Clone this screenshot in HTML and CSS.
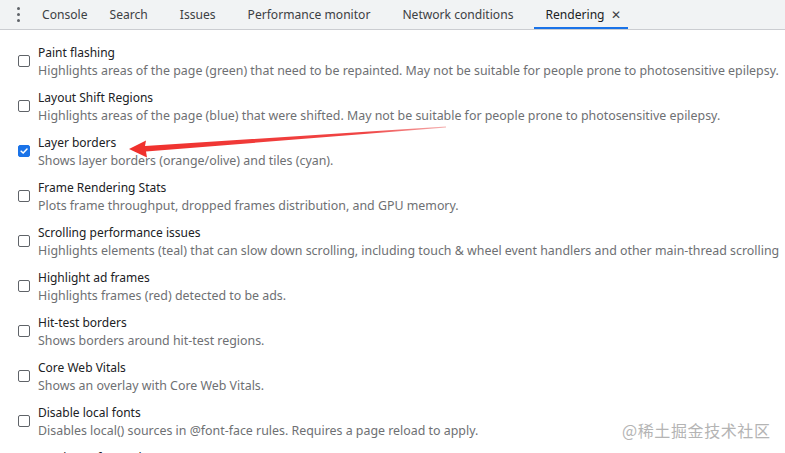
FILE: index.html
```html
<!DOCTYPE html>
<html>
<head>
<meta charset="utf-8">
<link rel="stylesheet" href="styles.css">
</head>
<body>
<div class="tabbar">
  <div class="menu"><span></span><span></span><span></span></div>
  <div class="tab first">Console</div>
  <div class="tab">Search</div>
  <div class="tab">Issues</div>
  <div class="tab">Performance monitor</div>
  <div class="tab">Network conditions</div>
  <div class="tab active">Rendering <span class="close">✕</span></div>
</div>
<div class="list">
  <div class="row"><span class="cb"></span><div class="txt"><div class="title">Paint flashing</div><div class="desc">Highlights areas of the page (green) that need to be repainted. May not be suitable for people prone to photosensitive epilepsy.</div></div></div>
  <div class="row"><span class="cb"></span><div class="txt"><div class="title">Layout Shift Regions</div><div class="desc">Highlights areas of the page (blue) that were shifted. May not be suitable for people prone to photosensitive epilepsy.</div></div></div>
  <div class="row"><span class="cb checked"><svg viewBox="0 0 12 12" width="12" height="12"><path d="M2.6 6.2 L5 8.5 L9.6 3.6" fill="none" stroke="#fff" stroke-width="1.8" stroke-linecap="round" stroke-linejoin="round"/></svg></span><div class="txt"><div class="title">Layer borders</div><div class="desc">Shows layer borders (orange/olive) and tiles (cyan).</div></div></div>
  <div class="row"><span class="cb"></span><div class="txt"><div class="title">Frame Rendering Stats</div><div class="desc">Plots frame throughput, dropped frames distribution, and GPU memory.</div></div></div>
  <div class="row"><span class="cb"></span><div class="txt"><div class="title">Scrolling performance issues</div><div class="desc">Highlights elements (teal) that can slow down scrolling, including touch &amp; wheel event handlers and other main-thread scrolling</div></div></div>
  <div class="row"><span class="cb"></span><div class="txt"><div class="title">Highlight ad frames</div><div class="desc">Highlights frames (red) detected to be ads.</div></div></div>
  <div class="row"><span class="cb"></span><div class="txt"><div class="title">Hit-test borders</div><div class="desc">Shows borders around hit-test regions.</div></div></div>
  <div class="row"><span class="cb"></span><div class="txt"><div class="title">Core Web Vitals</div><div class="desc">Shows an overlay with Core Web Vitals.</div></div></div>
  <div class="row"><span class="cb"></span><div class="txt"><div class="title">Disable local fonts</div><div class="desc">Disables local() sources in @font-face rules. Requires a page reload to apply.</div></div></div>
  <div class="row"><span class="cb"></span><div class="txt"><div class="title">Emulate a focused page</div><div class="desc">Emulates a focused page.</div></div></div>
</div>
<svg class="arrow" width="785" height="453" viewBox="0 0 785 453">
  <defs>
    <linearGradient id="g" x1="130" y1="149" x2="446" y2="126" gradientUnits="userSpaceOnUse">
      <stop offset="0" stop-color="#f0302c"/>
      <stop offset="0.75" stop-color="#f04545"/>
      <stop offset="1" stop-color="#f4b0b0"/>
    </linearGradient>
  </defs>
  <path d="M129 149 L146 140.5 L145 146 L446 126.5 L446 127.5 L146 151.5 L147 157.5 Z" fill="url(#g)"/>
</svg>
<div class="watermark">@稀土掘金技术社区</div>
</body>
</html>
```
FILE: styles.css
```css
html, body {
  margin: 0;
  padding: 0;
}
body {
  width: 785px;
  height: 453px;
  overflow: hidden;
  position: relative;
  background: #fff;
  font-family: "Noto Sans", "Open Sans", sans-serif;
  color: #202124;
}
.tabbar {
  height: 29px;
  background: #f1f3f4;
  border-bottom: 1px solid #cbcdd1;
  display: flex;
  align-items: stretch;
  font-size: 12.1px;
  color: #3c4043;
}
.menu {
  width: 31px;
  display: flex;
  flex-direction: column;
  align-items: center;
  justify-content: center;
  gap: 3px;
  padding-left: 5px;
  box-sizing: border-box;
}
.menu span {
  width: 3px;
  height: 3px;
  border-radius: 50%;
  background: #5f6368;
}
.tab {
  display: flex;
  align-items: center;
  padding: 0 11px;
  white-space: nowrap;
  position: relative;
  margin-right: 10px;
}
.tab.first {
  padding-right: 0;
  margin-right: 11px;
}
.tab.active {
  color: #202124;
  padding-right: 7px;
}
.tab.active::after {
  content: "";
  position: absolute;
  left: 0;
  right: 0;
  bottom: 0;
  height: 2px;
  background: #1a73e8;
}
.close {
  font-size: 12px;
  margin-left: 6px;
  color: #3c4043;
}
.list {
  padding-top: 14px;
}
.row {
  display: flex;
  height: 45px;
  padding-left: 18px;
  white-space: nowrap;
}
.cb {
  width: 12px;
  height: 12px;
  border: 1px solid #5f6368;
  border-radius: 2px;
  box-sizing: border-box;
  margin-top: 11px;
  margin-right: 8px;
  flex: none;
  display: flex;
  align-items: center;
  justify-content: center;
}
.cb.checked {
  background: #1a73e8;
  border-color: #1a73e8;
}
.title {
  font-size: 12px;
  line-height: 18px;
  color: #202124;
}
.desc {
  font-size: 12.4px;
  line-height: 18px;
  color: #6e7073;
}
.arrow {
  position: absolute;
  left: 0;
  top: 0;
  pointer-events: none;
}
.watermark {
  position: absolute;
  left: 622px;
  top: 418px;
  font-family: "Noto Sans CJK SC", sans-serif;
  font-size: 16px;
  color: #b4b4b4;
  letter-spacing: 0.6px;
}
```
